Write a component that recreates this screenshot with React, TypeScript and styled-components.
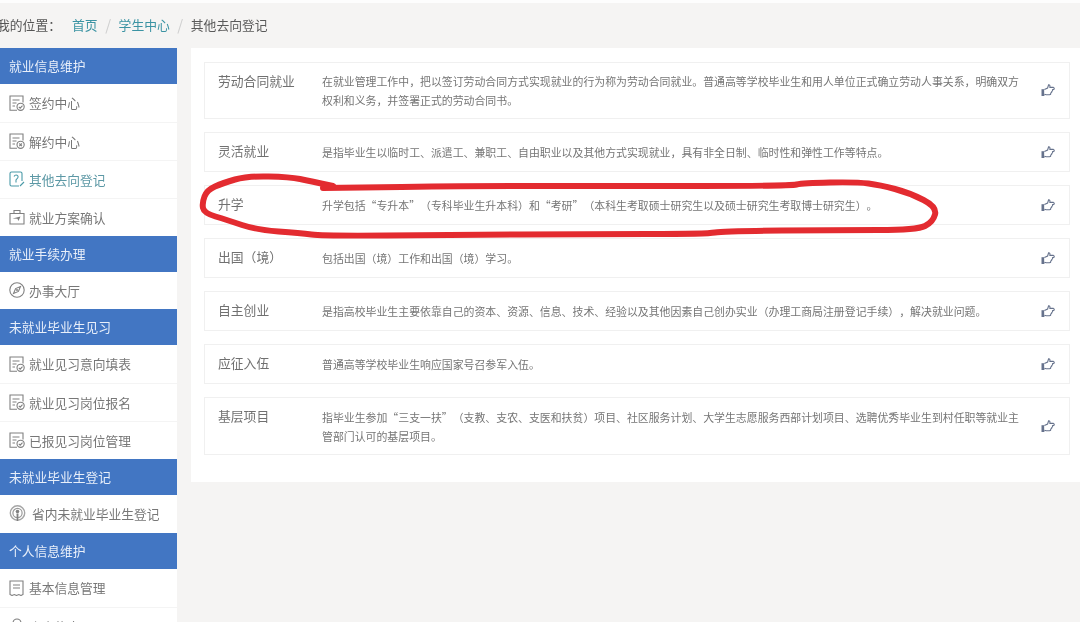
import React from "react";
import styled, { createGlobalStyle } from "styled-components";

const Global = createGlobalStyle`
  html, body { margin: 0; padding: 0; height: 622px; overflow: hidden; background: #f5f4f3; }
  body {
    font-family: "Noto Sans CJK SC", "Liberation Sans", sans-serif;
    text-spacing-trim: space-all;
  }
  #root { height: 622px; overflow: hidden; }
`;

const Page = styled.div`
  position: relative;
  width: 1080px;
  height: 622px;
  overflow: hidden;
  display: flex;
  flex-direction: column;
  background: #f5f4f3;
  filter: blur(0.4px);
`;

const TopBar = styled.nav`
  height: 48px;
  flex: none;
  box-sizing: border-box;
  border-top: 3px solid #fdfdfd;
  padding-bottom: 2px;
  margin-left: -3px;
  display: flex;
  align-items: center;
  font-size: 12.8px;
  line-height: 43px;
  color: #555;
`;
const Crumb = styled.span<{ $link?: boolean }>`
  color: ${(p) => (p.$link ? "#3b93a3" : "#5a5a5a")};
`;
const Label = styled.span`
  width: 75px;
  white-space: pre;
`;
const Sep = styled.span`
  color: #cfcfcf;
  font-size: 15px;
  width: 21px;
  text-align: center;
`;

const Body = styled.div`
  display: flex;
  align-items: flex-start;
  gap: 14px;
`;

const Side = styled.aside`
  width: 177px;
  flex: none;
  display: flex;
  flex-direction: column;
  background: #fff;
`;
const SideHead = styled.div`
  height: 36px;
  box-sizing: border-box;
  padding: 0 0 2px 9px;
  display: flex;
  align-items: center;
  background: #4276c3;
  color: #e8effa;
  font-size: 12.75px;
`;
const SideItem = styled.div<{ $active?: boolean; $h?: number; $wide?: boolean }>`
  height: ${(p) => p.$h ?? 38}px;
  box-sizing: border-box;
  display: flex;
  align-items: center;
  padding: 0 0 1px 9px;
  gap: ${(p) => (p.$wide ? 6 : 4)}px;
  color: ${(p) => (p.$active ? "#5c98a5" : "#777")};
  font-size: 12.75px;
  white-space: nowrap;
  & + & { border-top: 1px solid #f4f4f4; }
  svg { flex: none; }
`;

const Panel = styled.main`
  width: 900px;
  flex: none;
  height: 434px;
  box-sizing: border-box;
  padding: 14px 10px 0 13px;
  background: #fff;
  display: flex;
  flex-direction: column;
  gap: 13px;
`;
const Row = styled.section<{ $h: number }>`
  height: ${(p) => p.$h}px;
  box-sizing: border-box;
  width: 866px;
  border: 1px solid #f0f0f0;
  display: grid;
  grid-template-columns: 104px 700px 1fr;
  padding-left: 13px;
  align-items: center;
`;
const RowTitle = styled.div`
  align-self: start;
  padding-top: 9px;
  font-size: 12.8px;
  line-height: 17px;
  color: #707070;
`;
const RowText = styled.div`
  font-size: 10.9px;
  line-height: 19px;
  padding-top: 1px;
  color: #757575;
`;
const RowAct = styled.div`
  display: flex;
  justify-content: center;
  padding-left: 4px;
`;

const Marker = styled.svg`
  position: absolute;
  left: 0;
  top: 0;
  pointer-events: none;
`;

const stroke = (c = "#808080") => ({ fill: "none", stroke: c, strokeWidth: 1.1 });

const Doc = ({ mark }: { mark: "check" | "x" }) => (
  <svg width="16" height="16" viewBox="0 0 16 16">
    <path d="M8 15.2H1V1H14V7.5" {...stroke()} />
    <path d="M3.5 5H10.5M3.5 8H7.5M3.5 11H6" {...stroke()} />
    <circle cx="11.6" cy="11.8" r="3.6" {...stroke()} />
    {mark === "check" ? (
      <path d="M9.8 11.8l1.4 1.4 2.3-2.5" {...stroke()} />
    ) : (
      <path d="M10.3 10.5l2.6 2.6M12.9 10.5l-2.6 2.6" {...stroke()} />
    )}
  </svg>
);
const Turn = () => (
  <svg width="16" height="16" viewBox="0 0 16 16">
    <path d="M10 15H2.5Q1 15 1 13.5V2.5Q1 1 2.5 1H11.5Q13 1 13 2.5V10" {...stroke("#4a9aa8")} />
    <path d="M5 5.5Q6 3.6 8 4.2Q9.8 5 8.6 7L7 9V11.5" {...stroke("#4a9aa8")} />
    <path d="M11 15l4-4" {...stroke("#4a9aa8")} />
  </svg>
);
const Case = () => (
  <svg width="16" height="16" viewBox="0 0 16 16">
    <path d="M1 4.5H15V15H1Z" {...stroke()} />
    <path d="M5 4.5V1.5H11V4.5" {...stroke()} />
    <path d="M3.5 9.5L11.5 7.5L9.5 12L8.4 9.8Z" fill="#808080" />
  </svg>
);
const Compass = () => (
  <svg width="16" height="16" viewBox="0 0 16 16">
    <circle cx="8" cy="8" r="7.2" {...stroke()} />
    <path d="M11.5 4.5L9.4 9.4L4.5 11.5L6.6 6.6Z" {...stroke()} />
    <circle cx="8" cy="8" r="1" fill="#808080" />
  </svg>
);
const Cast = () => (
  <svg width="17" height="17" viewBox="0 0 17 17">
    <circle cx="8.5" cy="8" r="7.2" fill="none" stroke="#a5a5a5" strokeWidth="1.4" />
    <circle cx="8.5" cy="8" r="4.6" fill="none" stroke="#999" strokeWidth="1.2" />
    <circle cx="8.5" cy="6.5" r="1.8" fill="#808080" />
    <path d="M7.5 8.5H9.5L9.2 16H7.8Z" fill="#808080" />
  </svg>
);
const Sheet = () => (
  <svg width="16" height="16" viewBox="0 0 16 16">
    <path d="M1 14.5V1H14V14.5L12 15.5 9.8 14.5 7.5 15.5 5.3 14.5 3 15.5Z" {...stroke()} />
    <path d="M4 5H11M4 8H11" {...stroke()} />
  </svg>
);
const User = () => (
  <svg width="16" height="16" viewBox="0 0 16 16">
    <circle cx="8" cy="5" r="4" {...stroke()} />
    <path d="M1 15Q2 9.5 8 9.5T15 15" {...stroke()} />
  </svg>
);
const Thumb = () => (
  <svg width="14" height="13" viewBox="0 0 14 13">
    <path d="M0.5 5.2H3.4V12H0.5Z" fill="#66728c" />
    <path
      d="M3.4 5.4L6.6 4L7.6 0.8Q9.2 0.6 8.9 3.4H12.4Q13.7 3.9 13 5.2L11.6 5.6Q12 7 10.8 7.4Q11 8.8 9.8 9Q10 10.6 8.6 10.8H5.2L3.4 10.2"
      fill="#fff"
      stroke="#66728c"
      strokeWidth="1.1"
    />
  </svg>
);

type NavEntry =
  | { head: string }
  | { text: string; icon: React.ReactNode; active?: boolean; h?: number; wide?: boolean };

const nav: NavEntry[] = [
  { head: "就业信息维护" },
  { text: "签约中心", icon: <Doc mark="check" /> },
  { text: "解约中心", icon: <Doc mark="x" /> },
  { text: "其他去向登记", icon: <Turn />, active: true },
  { text: "就业方案确认", icon: <Case /> },
  { head: "就业手续办理" },
  { text: "办事大厅", icon: <Compass />, h: 37 },
  { head: "未就业毕业生见习" },
  { text: "就业见习意向填表", icon: <Doc mark="check" /> },
  { text: "就业见习岗位报名", icon: <Doc mark="check" /> },
  { text: "已报见习岗位管理", icon: <Doc mark="check" /> },
  { head: "未就业毕业生登记" },
  { text: "省内未就业毕业生登记", icon: <Cast />, wide: true },
  { head: "个人信息维护" },
  { text: "基本信息管理", icon: <Sheet /> },
  { text: "个人信息", icon: <User /> },
];

const rows = [
  { h: 57, t: "劳动合同就业", d: "在就业管理工作中，把以签订劳动合同方式实现就业的行为称为劳动合同就业。普通高等学校毕业生和用人单位正式确立劳动人事关系，明确双方权利和义务，并签署正式的劳动合同书。" },
  { h: 40, t: "灵活就业", d: "是指毕业生以临时工、派遣工、兼职工、自由职业以及其他方式实现就业，具有非全日制、临时性和弹性工作等特点。" },
  { h: 40, t: "升学", d: "升学包括“专升本”（专科毕业生升本科）和“考研”（本科生考取硕士研究生以及硕士研究生考取博士研究生）。" },
  { h: 40, t: "出国（境）", d: "包括出国（境）工作和出国（境）学习。" },
  { h: 40, t: "自主创业", d: "是指高校毕业生主要依靠自己的资本、资源、信息、技术、经验以及其他因素自己创办实业（办理工商局注册登记手续），解决就业问题。" },
  { h: 40, t: "应征入伍", d: "普通高等学校毕业生响应国家号召参军入伍。" },
  { h: 58, t: "基层项目", d: "指毕业生参加“三支一扶”（支教、支农、支医和扶贫）项目、社区服务计划、大学生志愿服务西部计划项目、选聘优秀毕业生到村任职等就业主管部门认可的基层项目。" },
];

const ink: [number, number][] = [
  [333, 186], [310, 181], [290, 177], [247, 176], [223, 183], [207, 190], [202, 203], [204, 213],
  [227, 220], [257, 230], [300, 233], [323, 236], [450, 235], [590, 234], [707, 234], [723, 231],
  [840, 230], [917, 230], [933, 222], [937, 207], [910, 193], [880, 185], [857, 182], [803, 183],
  [790, 186], [590, 186], [480, 186], [323, 188],
];
const inkPath = ink.reduce((d, [x, y], i) => {
  if (i === 0) return `M${x} ${y}`;
  if (i === ink.length - 1) return `${d}L${x} ${y}`;
  const [nx, ny] = ink[i + 1];
  return `${d}Q${x} ${y} ${(x + nx) / 2} ${(y + ny) / 2}`;
}, "");

export default function App() {
  return (
    <Page>
      <Global />
      <TopBar>
        <Label>我的位置：</Label>
        <Crumb $link>首页</Crumb>
        <Sep>/</Sep>
        <Crumb $link>学生中心</Crumb>
        <Sep>/</Sep>
        <Crumb>其他去向登记</Crumb>
      </TopBar>
      <Body>
        <Side>
          {nav.map((n, i) =>
            "head" in n ? (
              <SideHead key={i}>{n.head}</SideHead>
            ) : (
              <SideItem key={i} $active={n.active} $h={n.h} $wide={n.wide}>
                {n.icon}
                {n.text}
              </SideItem>
            )
          )}
        </Side>
        <Panel>
          {rows.map((r) => (
            <Row key={r.t} $h={r.h}>
              <RowTitle>{r.t}</RowTitle>
              <RowText>{r.d}</RowText>
              <RowAct>
                <Thumb />
              </RowAct>
            </Row>
          ))}
        </Panel>
      </Body>
      <Marker width="1080" height="622" viewBox="0 0 1080 622">
        <path
          d={inkPath}
          fill="none"
          stroke="#e32b30"
          strokeWidth="6"
          strokeLinecap="round"
          strokeLinejoin="round"
        />
      </Marker>
    </Page>
  );
}
